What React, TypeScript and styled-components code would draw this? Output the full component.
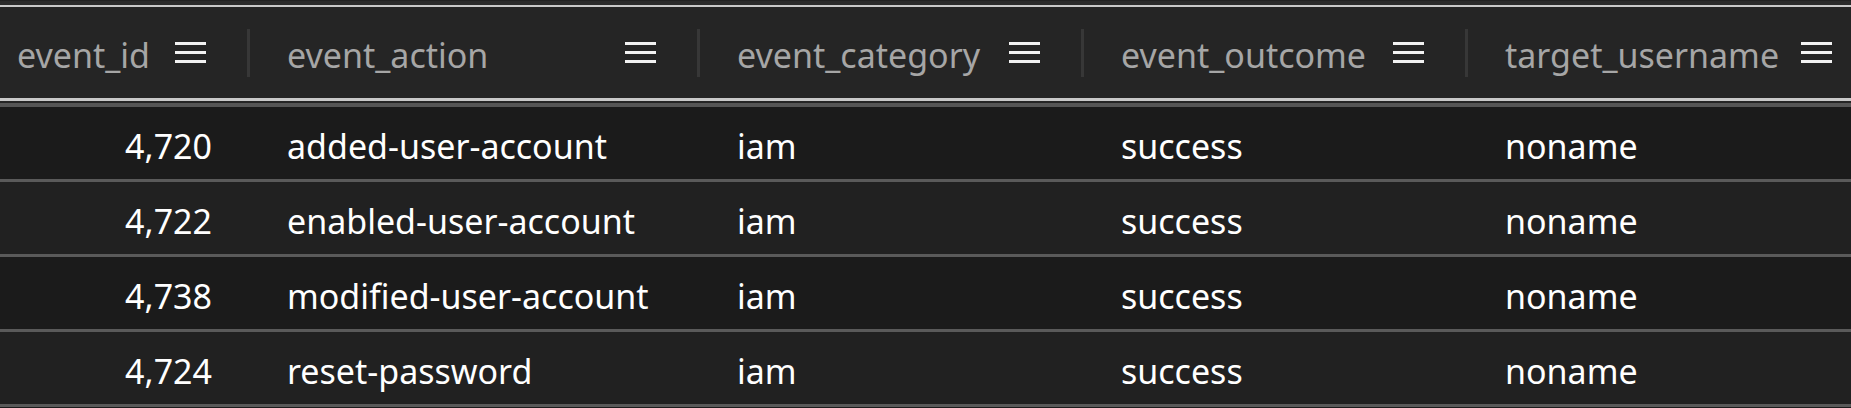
import React from "react";
import styled, { createGlobalStyle } from "styled-components";

const GlobalStyle = createGlobalStyle`
  html, body { margin: 0; padding: 0; background: #1c1c1c; }
  body { font-family: "Noto Sans", "Open Sans", sans-serif; }
  * { box-sizing: border-box; }
`;

type Col = { key: string; title: string; width: number; numeric?: boolean };

const columns: Col[] = [
  { key: "id", title: "event_id", width: 270, numeric: true },
  { key: "action", title: "event_action", width: 450 },
  { key: "category", title: "event_category", width: 384 },
  { key: "outcome", title: "event_outcome", width: 384 },
  { key: "user", title: "target_username", width: 408 },
];

const rows = [
  ["4,720", "added-user-account", "iam", "success", "noname"],
  ["4,722", "enabled-user-account", "iam", "success", "noname"],
  ["4,738", "modified-user-account", "iam", "success", "noname"],
  ["4,724", "reset-password", "iam", "success", "noname"],
];

const Viewport = styled.div`
  width: 100%;
  height: 408px;
  overflow: hidden;
  background: #1c1c1c;
`;

const TopStrip = styled.div`
  height: 5px;
  background: #2b2b2b;
  border-top: 1px solid #222;
`;

const Grid = styled.div<{ $template: string }>`
  display: grid;
  grid-template-columns: ${(p) => p.$template};
  margin-left: -20px;
  width: max-content;
`;

const HeaderRow = styled.div`
  display: contents;
`;

const HeaderCell = styled.div`
  display: flex;
  align-items: center;
  height: 96px;
  padding: 4px 0 0 37px;
  background: #252525;
  border-top: 2px solid #c9c9c9;
  border-bottom: 3px solid #c9c9c9;
  box-shadow: 0 2px 0 #262626, 0 6px 0 #565656;
  margin-bottom: 6px;
`;

const HeaderLabel = styled.span`
  flex: 1;
  min-width: 0;
  white-space: nowrap;
  font-size: 34px;
  color: #a6a6a6;
  line-height: 46px;
`;

const MenuButton = styled.span`
  display: flex;
  flex-direction: column;
  justify-content: space-between;
  width: 31px;
  height: 21px;
  margin-top: -4px;
  margin-right: 41px;
  flex-shrink: 0;
`;

const MenuLine = styled.span`
  display: block;
  height: 3px;
  background: #f2f2f2;
`;

const Divider = styled.span`
  width: 3px;
  height: 48px;
  margin-top: -4px;
  background: #373737;
  flex-shrink: 0;
`;

const BodyCell = styled.div<{ $numeric?: boolean; $alt: boolean }>`
  display: flex;
  align-items: center;
  justify-content: ${(p) => (p.$numeric ? "flex-end" : "flex-start")};
  height: 75px;
  padding: ${(p) => (p.$numeric ? "6px 38px 0 0" : "6px 0 0 37px")};
  background: ${(p) => (p.$alt ? "#212121" : "#1b1b1b")};
  border-bottom: 3px solid #5a5a5a;
  font-size: 34px;
  line-height: 46px;
  color: #ffffff;
  white-space: nowrap;
`;

function MenuIcon() {
  return (
    <MenuButton aria-label="column menu">
      <MenuLine />
      <MenuLine />
      <MenuLine />
    </MenuButton>
  );
}

export default function App() {
  const template = columns.map((c) => `${c.width}px`).join(" ");
  return (
    <>
      <GlobalStyle />
      <Viewport>
        <TopStrip />
        <Grid $template={template}>
          <HeaderRow>
            {columns.map((c) => (
              <HeaderCell key={c.key}>
                <HeaderLabel>{c.title}</HeaderLabel>
                <MenuIcon />
                <Divider />
              </HeaderCell>
            ))}
          </HeaderRow>
          {rows.map((r, ri) =>
            r.map((v, ci) => (
              <BodyCell key={`${ri}-${ci}`} $numeric={columns[ci].numeric} $alt={ri % 2 === 1}>
                {v}
              </BodyCell>
            ))
          )}
        </Grid>
      </Viewport>
    </>
  );
}
